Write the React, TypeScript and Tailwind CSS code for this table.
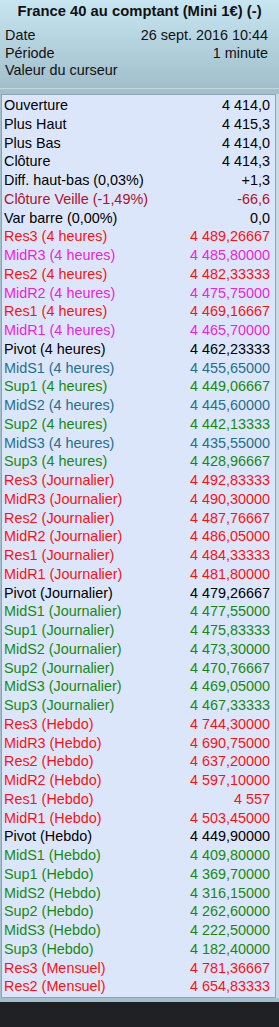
type Row = { label: string; value: string; color: string }

const RED = 'text-[#ff1010]'
const MAG = 'text-[#f020e0]'
const TEAL = 'text-[#1f6f8f]'
const GREEN = 'text-[#168a10]'
const BLACK = 'text-black'

const rows: Row[] = [
  { label: 'Ouverture', value: '4 414,0', color: BLACK },
  { label: 'Plus Haut', value: '4 415,3', color: BLACK },
  { label: 'Plus Bas', value: '4 414,0', color: BLACK },
  { label: 'Clôture', value: '4 414,3', color: BLACK },
  { label: 'Diff. haut-bas (0,03%)', value: '+1,3', color: BLACK },
  { label: 'Clôture Veille (-1,49%)', value: '-66,6', color: 'text-[#b01028]' },
  { label: 'Var barre (0,00%)', value: '0,0', color: BLACK },
  { label: 'Res3 (4 heures)', value: '4 489,26667', color: RED },
  { label: 'MidR3 (4 heures)', value: '4 485,80000', color: MAG },
  { label: 'Res2 (4 heures)', value: '4 482,33333', color: RED },
  { label: 'MidR2 (4 heures)', value: '4 475,75000', color: MAG },
  { label: 'Res1 (4 heures)', value: '4 469,16667', color: RED },
  { label: 'MidR1 (4 heures)', value: '4 465,70000', color: MAG },
  { label: 'Pivot (4 heures)', value: '4 462,23333', color: BLACK },
  { label: 'MidS1 (4 heures)', value: '4 455,65000', color: TEAL },
  { label: 'Sup1 (4 heures)', value: '4 449,06667', color: GREEN },
  { label: 'MidS2 (4 heures)', value: '4 445,60000', color: TEAL },
  { label: 'Sup2 (4 heures)', value: '4 442,13333', color: GREEN },
  { label: 'MidS3 (4 heures)', value: '4 435,55000', color: TEAL },
  { label: 'Sup3 (4 heures)', value: '4 428,96667', color: GREEN },
  { label: 'Res3 (Journalier)', value: '4 492,83333', color: RED },
  { label: 'MidR3 (Journalier)', value: '4 490,30000', color: RED },
  { label: 'Res2 (Journalier)', value: '4 487,76667', color: RED },
  { label: 'MidR2 (Journalier)', value: '4 486,05000', color: RED },
  { label: 'Res1 (Journalier)', value: '4 484,33333', color: RED },
  { label: 'MidR1 (Journalier)', value: '4 481,80000', color: RED },
  { label: 'Pivot (Journalier)', value: '4 479,26667', color: BLACK },
  { label: 'MidS1 (Journalier)', value: '4 477,55000', color: GREEN },
  { label: 'Sup1 (Journalier)', value: '4 475,83333', color: GREEN },
  { label: 'MidS2 (Journalier)', value: '4 473,30000', color: GREEN },
  { label: 'Sup2 (Journalier)', value: '4 470,76667', color: GREEN },
  { label: 'MidS3 (Journalier)', value: '4 469,05000', color: GREEN },
  { label: 'Sup3 (Journalier)', value: '4 467,33333', color: GREEN },
  { label: 'Res3 (Hebdo)', value: '4 744,30000', color: RED },
  { label: 'MidR3 (Hebdo)', value: '4 690,75000', color: RED },
  { label: 'Res2 (Hebdo)', value: '4 637,20000', color: RED },
  { label: 'MidR2 (Hebdo)', value: '4 597,10000', color: RED },
  { label: 'Res1 (Hebdo)', value: '4 557', color: RED },
  { label: 'MidR1 (Hebdo)', value: '4 503,45000', color: RED },
  { label: 'Pivot (Hebdo)', value: '4 449,90000', color: BLACK },
  { label: 'MidS1 (Hebdo)', value: '4 409,80000', color: GREEN },
  { label: 'Sup1 (Hebdo)', value: '4 369,70000', color: GREEN },
  { label: 'MidS2 (Hebdo)', value: '4 316,15000', color: GREEN },
  { label: 'Sup2 (Hebdo)', value: '4 262,60000', color: GREEN },
  { label: 'MidS3 (Hebdo)', value: '4 222,50000', color: GREEN },
  { label: 'Sup3 (Hebdo)', value: '4 182,40000', color: GREEN },
  { label: 'Res3 (Mensuel)', value: '4 781,36667', color: RED },
  { label: 'Res2 (Mensuel)', value: '4 654,83333', color: RED },
]

export default function App() {
  return (
    <div className="w-[279px] h-[1027px] bg-[#202124] font-['Liberation_Sans',Arial,sans-serif] text-[14.4px] leading-none">
      <div className="bg-[#a3bfcb] pb-[4px]">
        {/* Header */}
        <div className="h-[89px] bg-gradient-to-b from-[#c8e6f2] to-[#a0bfcb] border-b border-[#c4d6de] px-[5px]">
          <div className="h-[22px] flex items-center justify-center font-bold text-[14.8px] text-[#111]">
            France 40 au comptant (Mini 1€) (-)
          </div>
          <div className="mt-[4.5px] flex flex-col text-[#111]">
            <div className="h-[17.5px] flex items-center justify-between pr-[6px]">
              <span>Date</span>
              <span>26 sept. 2016 10:44</span>
            </div>
            <div className="h-[17.5px] flex items-center justify-between pr-[6px]">
              <span>Période</span>
              <span>1 minute</span>
            </div>
            <div className="h-[17.5px] flex items-center">
              <span>Valeur du curseur</span>
            </div>
          </div>
        </div>

        {/* Values */}
        <div className="flex pt-[5px] pl-[1px]">
          <div className="w-[275px] border border-[#8ea4b2] bg-[#dce6fa] py-[1px]">
            {rows.map((r, i) => (
              <div key={i} className={`h-[18.75px] flex items-center justify-between pl-[2px] pr-[5px] ${r.color}`}>
                <span>{r.label}</span>
                <span>{r.value}</span>
              </div>
            ))}
          </div>
          <div className="w-[3px] bg-[#c9dae2]" />
        </div>
      </div>
    </div>
  )
}
